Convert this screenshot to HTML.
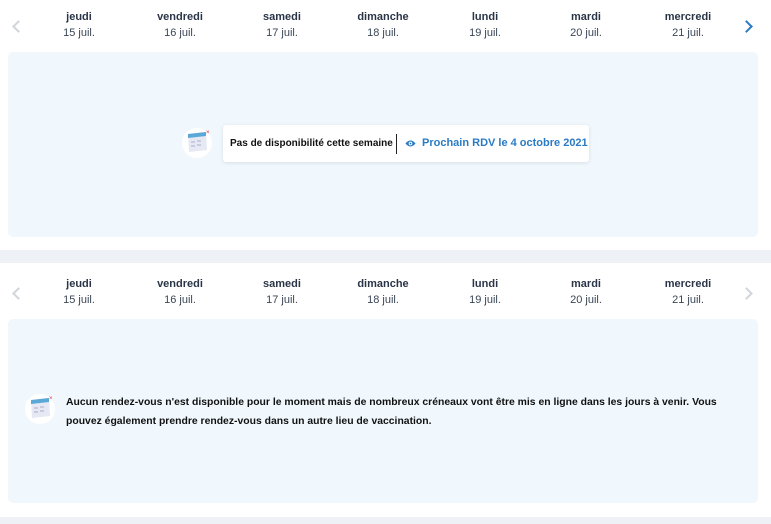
<!DOCTYPE html>
<html><head><meta charset="utf-8"><style>
*{margin:0;padding:0;box-sizing:border-box}
body{width:771px;height:524px;background:#eef1f5;font-family:"Liberation Sans",sans-serif;position:relative;overflow:hidden}
.panel{position:absolute;left:0;width:771px;background:#fff}
.day{position:absolute;width:100px;text-align:center;font-size:11px;line-height:16px;color:#1f2a3a}
.day b{display:block;font-weight:bold;color:#2a3547}
.day span{color:#3a4656}
.box{position:absolute;left:8px;width:750px;background:#f0f8fd;border-radius:5px}
.chev{position:absolute;width:9px;height:9px;border-left:2px solid #d0d5db;border-bottom:2px solid #d0d5db}
.ico{position:absolute;width:30px;height:30px;border-radius:50%;background:#fff}
</style></head><body>
<div class="panel" style="top:0;height:250px">
<div class="chev" style="left:14px;top:22px;transform:rotate(45deg)"></div>
<div class="chev" style="left:742px;top:22px;transform:rotate(-135deg);border-color:#2b7bc4"></div>
<div class="day" style="left:29px;top:9px"><b>jeudi</b><span>15 juil.</span></div>
<div class="day" style="left:130px;top:9px"><b>vendredi</b><span>16 juil.</span></div>
<div class="day" style="left:232px;top:9px"><b>samedi</b><span>17 juil.</span></div>
<div class="day" style="left:333px;top:9px"><b>dimanche</b><span>18 juil.</span></div>
<div class="day" style="left:435px;top:9px"><b>lundi</b><span>19 juil.</span></div>
<div class="day" style="left:536px;top:9px"><b>mardi</b><span>20 juil.</span></div>
<div class="day" style="left:638px;top:9px"><b>mercredi</b><span>21 juil.</span></div>
<div class="box" style="top:52px;height:185px"></div>
<div class="ico" style="left:182px;top:128px"></div>
<svg style="position:absolute;left:185px;top:129px" width="26" height="26" viewBox="0 0 26 26"><path d="M3 5 L21 3 L22 21 L4 23Z" fill="#e6e8f3"/><path d="M3 5 L21 3 L21 7 L3 9Z" fill="#5aa8d8"/><g fill="#c9c9e0"><rect x="6" y="12" width="4" height="2"/><rect x="12" y="11" width="4" height="2"/><rect x="6" y="16" width="4" height="2"/><rect x="12" y="15" width="4" height="2"/></g><text x="21" y="5" font-size="6" fill="#e0283c" font-family="Liberation Sans">×</text></svg>
<div style="position:absolute;left:223px;top:125px;width:366px;height:37px;background:#fff;border-radius:3px;box-shadow:0 1px 4px rgba(0,0,0,.1);font-size:11px;line-height:37px">
<span style="position:absolute;left:7px;font-weight:bold;color:#111;font-size:10px">Pas de disponibilité cette semaine</span>
<div style="position:absolute;left:173px;top:9px;width:1px;height:20px;background:#222"></div>
<svg style="position:absolute;left:182px;top:14px" width="11" height="9" viewBox="0 0 12 9"><path d="M0.5 4.5 Q6 -2 11.5 4.5 Q6 11 0.5 4.5Z" fill="#2b7bc4"/><circle cx="6" cy="4.5" r="2" fill="#fff"/><circle cx="6" cy="4.5" r="1" fill="#2b7bc4"/></svg>
<span style="position:absolute;left:199px;font-weight:bold;color:#2b7bc4">Prochain RDV le 4 octobre 2021</span>
</div>
</div>
<div class="panel" style="top:263px;height:254px">
<div class="chev" style="left:14px;top:26px;transform:rotate(45deg)"></div>
<div class="chev" style="left:742px;top:26px;transform:rotate(-135deg)"></div>
<div class="day" style="left:29px;top:13px"><b>jeudi</b><span>15 juil.</span></div>
<div class="day" style="left:130px;top:13px"><b>vendredi</b><span>16 juil.</span></div>
<div class="day" style="left:232px;top:13px"><b>samedi</b><span>17 juil.</span></div>
<div class="day" style="left:333px;top:13px"><b>dimanche</b><span>18 juil.</span></div>
<div class="day" style="left:435px;top:13px"><b>lundi</b><span>19 juil.</span></div>
<div class="day" style="left:536px;top:13px"><b>mardi</b><span>20 juil.</span></div>
<div class="day" style="left:638px;top:13px"><b>mercredi</b><span>21 juil.</span></div>
<div class="box" style="top:56px;height:184px"></div>
<div class="ico" style="left:25px;top:131px"></div>
<svg style="position:absolute;left:28px;top:132px" width="26" height="26" viewBox="0 0 26 26"><path d="M3 5 L21 3 L22 21 L4 23Z" fill="#e6e8f3"/><path d="M3 5 L21 3 L21 7 L3 9Z" fill="#5aa8d8"/><g fill="#c9c9e0"><rect x="6" y="12" width="4" height="2"/><rect x="12" y="11" width="4" height="2"/><rect x="6" y="16" width="4" height="2"/><rect x="12" y="15" width="4" height="2"/></g><text x="21" y="5" font-size="6" fill="#e0283c" font-family="Liberation Sans">×</text></svg>
<div style="position:absolute;left:66px;top:130px;width:662px;font-size:10.4px;line-height:19px;font-weight:bold;color:#111">Aucun rendez-vous n'est disponible pour le moment mais de nombreux créneaux vont être mis en ligne dans les jours à venir. Vous pouvez également prendre rendez-vous dans un autre lieu de vaccination.</div>
</div>
</body></html>
